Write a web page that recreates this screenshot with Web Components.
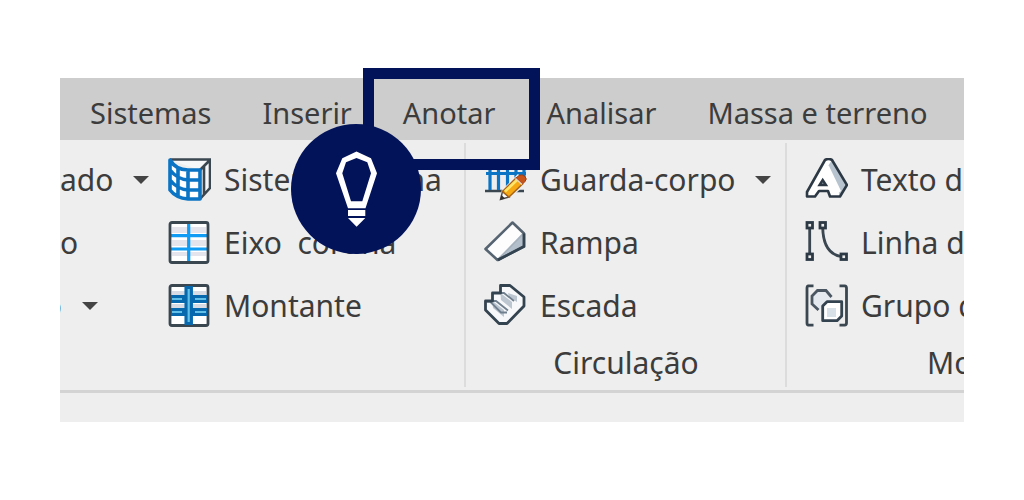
<!DOCTYPE html>
<html lang="pt-BR">
<head>
<meta charset="utf-8">
<title>Faixa de opções – Anotar</title>
<style>
  body { margin: 0; background: #fff; font-family: "Noto Sans", "Open Sans", sans-serif; color: #3c3c3c; }
</style>
</head>
<body>
<ribbon-view>
  <ribbon-tab slot="tabs">Sistemas</ribbon-tab>
  <ribbon-tab slot="tabs">Inserir</ribbon-tab>
  <ribbon-tab slot="tabs">Anotar</ribbon-tab>
  <ribbon-tab slot="tabs">Analisar</ribbon-tab>
  <ribbon-tab slot="tabs">Massa e terreno</ribbon-tab>

  <ribbon-panel>
    <ribbon-column class="cut">
      <ribbon-item menu>ado</ribbon-item>
      <ribbon-item>o</ribbon-item>
      <ribbon-item menu class="sliver">o</ribbon-item>
    </ribbon-column>
    <ribbon-column>
      <ribbon-item icon="curtain">Sistema cortina</ribbon-item>
      <ribbon-item icon="grid">Eixo  cortina</ribbon-item>
      <ribbon-item icon="mullion">Montante</ribbon-item>
    </ribbon-column>
  </ribbon-panel>
  <ribbon-panel class="ruled">
    <ribbon-column>
      <ribbon-item icon="railing" menu>Guarda-corpo</ribbon-item>
      <ribbon-item icon="ramp">Rampa</ribbon-item>
      <ribbon-item icon="stair">Escada</ribbon-item>
    </ribbon-column>
    <span slot="title">Circulação</span>
  </ribbon-panel>
  <ribbon-panel class="ruled last">
    <ribbon-column>
      <ribbon-item icon="text">Texto do</ribbon-item>
      <ribbon-item icon="line">Linha d</ribbon-item>
      <ribbon-item icon="group">Grupo d</ribbon-item>
    </ribbon-column>
    <span slot="title">Mo</span>
  </ribbon-panel>

  <tip-callout slot="callout"></tip-callout>
</ribbon-view>

<script>
const ICONS = {
  curtain: `<path d="M2 2H42V30L32 41V12Z" fill="#f6f7f8"/><path d="M2 1.500H42V30L32 41M32 12L42 2M36 8V36" fill="none" stroke="#3a4650" stroke-width="2.600"/>
    <path d="M2 2Q8 12 20 12H32V41H20Q8 40 2 32Z" fill="#fff"/>
    <path d="M2 2Q8 12 20 12H32V41H20Q8 40 2 32ZM10 9V38M20 12V41M2 12Q9 21 20 22H32M2 22Q9 31 20 32H32" fill="none" stroke="#0b74c4" stroke-width="3.600" stroke-linejoin="round"/>`,
  grid: `<rect x="2" y="1.500" width="38" height="40" rx="2" fill="#fff"/><path d="M4 6H38V12H4ZM4 19H38V25H4ZM4 31H38V35H4Z" fill="#e4e5ec"/><path d="M20.700 3V40M3 14.700H39M3 28H39" stroke="#109cf5" stroke-width="3.200"/><rect x="2" y="1.500" width="38" height="40" rx="2" fill="none" stroke="#3a4650" stroke-width="2.800"/>`,
  mullion: `<rect x="2" y="1.500" width="38" height="40" rx="2" fill="#fff"/><path d="M4 7H38V11H4ZM4 20H38V24H4Z" fill="#d8dbe3"/><rect x="2" y="1.500" width="38" height="40" rx="2" fill="none" stroke="#3a4650" stroke-width="2.800"/>
    <path d="M3 15H39M3 28H39" stroke="#0868ae" stroke-width="8"/><path d="M20.700 2V41" stroke="#0868ae" stroke-width="8.500"/><path d="M4 15H14M27 15H38M4 28H14M27 28H38M20.700 5V38" stroke="#62bfe8" stroke-width="2.200"/>`,
  railing: `<path d="M1 33H40" stroke="#3a4650" stroke-width="2.600"/><path d="M6 2V32M14.500 2V32M23.500 2V32M32 2V32M40 2V20M2 5H40M2 15.500H42" stroke="#0b74c4" stroke-width="3.200"/>
    <path d="M16.500 41.500L19 33L34 18L42 24L26 38.500Z" fill="#eee" stroke="#eee" stroke-width="3"/><path d="M16.500 41.500L18.500 33.500L25 39Z" fill="#fff" stroke="#55504c" stroke-width="1.500"/><path d="M16 42L17.500 37L21 40.500Z" fill="#333"/>
    <path d="M18.500 33.500L32 20L38.500 26L25 39Z" fill="#f6a912" stroke="#a96318" stroke-width="1.500"/><path d="M21 33.500L33 22" stroke="#ffe66a" stroke-width="2.600"/><path d="M32 20L35 17.500Q38 15.500 41 18.500Q43.500 21 41 23.500L38.500 26Z" fill="#c9541a" stroke="#9c3f13"/><path d="M31.500 20.500L38 26.500" stroke="#e8d6c4" stroke-width="1.500"/>`,
  ramp: `<path d="M28.500 1.500L40 12.500V25.500L13.500 39L1.500 28Z" fill="#fdfdfe"/><path d="M40 12.500V25.500L13.500 39Z" fill="#b3bfca"/><path d="M13.500 39L39 13" stroke="#a5b1bd" stroke-width="1.800"/><path d="M28.500 1.500L40 12.500V25.500L13.500 39L1.500 28Z" fill="none" stroke="#566472" stroke-width="2.600" stroke-linejoin="round"/><path d="M40 12.500V25.500L14 39" fill="none" stroke="#344350" stroke-width="2.600"/>`,
  stair: `<path d="M16.500 1.500H26L40 13V22L23 39.500H15L1.500 26V17H8.500V9H16.500Z" fill="#f6f8fa"/><path d="M8.500 17L20 26V33L9 24ZM16.500 9L28 18V25L17 16ZM24 9L33 12V18L25 13Z" fill="#bcc6d0"/>
    <path d="M16.500 9H20L30 17M8.500 17H12L24 26.500M3 17.500H6L17 28.500H23" fill="none" stroke="#71808e" stroke-width="1.800"/><path d="M16.500 1.500H26L40 13V22L23 39.500H15L1.500 26V17H8.500V9H16.500Z" fill="none" stroke="#344350" stroke-width="2.800" stroke-linejoin="round"/>`,
  text: `<path d="M20 2H27L42 27L35 38.500H25L23 33H14L10 38.500H2V34Z" fill="#fff"/><path d="M23 8L27 2L42 27L35 38Z" fill="#b7c4cf"/><path d="M20 5L24 8L36 33L31 37L20 15Z" fill="#fff"/><path d="M20 2Q23.500 0 27 2L42 27L35 38.500H25L23 33H14L10 38.500H2V34Z" fill="none" stroke="#2c3945" stroke-width="2.600" stroke-linejoin="round"/><path d="M17.700 22L21 27H14.500Z" fill="#8b98a4" stroke="#2c3945" stroke-width="2.400"/>`,
  line: `<path d="M4.700 6V34M17.700 6Q18 33 37 35.700" fill="none" stroke="#3a4650" stroke-width="2.800"/><g fill="#eee" stroke="#2c3945" stroke-width="2.800"><rect x="2" y="1.500" width="5.500" height="5.500"/><rect x="2" y="33" width="5.500" height="5.500"/><rect x="15" y="1.500" width="5.500" height="5.500"/><rect x="36" y="33" width="5.500" height="5.500"/></g>`,
  group: `<path d="M8.500 1.800H3.500Q2 2 2 4V39Q2 41 3.500 41.200H8.500M34.500 1.800H39.500Q41.500 2 41.500 4V39Q41.500 41 39.500 41.200H34.500" fill="none" stroke="#3a4650" stroke-width="2.800"/><path d="M13.500 26L7 20V12L12.500 6.500H21L26.500 12V18Z" fill="#e3e9ee"/><path d="M13.500 26L7 20V12L12.500 6.500H21L26.500 13" fill="none" stroke="#4a5763" stroke-width="2.800"/>
    <path d="M17.700 22L22 17.700H36.700V32L32 36.700H17.700Z" fill="#fff" stroke="#344350" stroke-width="2.800" stroke-linejoin="round"/><path d="M22 24H31V33H22Z" fill="#d9e1e8"/>`
};

const define = (name, html, setup) => {
  const template = document.createElement('template');
  template.innerHTML = html;
  customElements.define(name, class extends HTMLElement {
    constructor() {
      super();
      this.attachShadow({ mode: 'open' }).append(template.content.cloneNode(true));
    }
    connectedCallback() { if (setup) setup(this, this.shadowRoot); }
  });
};

define('ribbon-view', `
  <style>
    :host { display: block; position: relative; margin: 78px 60px; }
    .frame { overflow: hidden; background: #eee; }
    nav { display: flex; gap: 51px; padding: 8px 0 0 30px; background: #cdcdcd; }
    .panels { display: grid; grid-template-columns: minmax(0, 405fr) minmax(0, 321fr) minmax(0, 178fr); padding-top: 8px; border-bottom: 3px solid #d3d3d3; }
    footer { height: 29px; }
  </style>
  <div class="frame">
    <nav><slot name="tabs"></slot></nav>
    <div class="panels"><slot></slot></div>
    <footer></footer>
  </div>
  <slot name="callout"></slot>`);

define('ribbon-tab', `
  <style>
    :host { display: block; flex: none; }
    button { display: block; border: 0; padding: 0; background: none; font: inherit; font-size: 29px; line-height: 54px; color: inherit; white-space: nowrap; }
  </style>
  <button type="button"><slot></slot></button>`);

define('ribbon-panel', `
  <style>
    :host { display: block; position: relative; overflow: hidden; }
    .columns { display: flex; }
    .title { height: 53px; font-size: 30px; line-height: 52px; text-align: center; white-space: nowrap; }
    :host(.ruled) { margin: -5px 0 3px -1px; padding-top: 5px; border-left: 2px solid #dcdcdc; }
    :host(.ruled) .columns { padding-left: 18px; }
    :host(.ruled) .title { height: 50px; }
    :host(.last) .title { text-align: left; padding-left: 140px; }
  </style>
  <div class="columns"><slot></slot></div>
  <div class="title"><slot name="title"></slot></div>`);

define('ribbon-column', `
  <style>
    :host { display: block; flex: none; }
    :host(.cut) { width: 108px; }
  </style>
  <slot></slot>`);

define('ribbon-item', `
  <style>
    :host { display: block; }
    button { display: flex; align-items: center; gap: 13px; height: 63px; border: 0; padding: 0; background: none; font: inherit; font-size: 30px; line-height: 63px; color: inherit; white-space: pre; }
    svg { display: block; flex: none; }
    .arrow { width: 0; margin-left: 7px; border: 8px solid transparent; border-top-color: #444; border-bottom: 0; }
    .arrow[hidden] { display: none; }
    :host(.sliver) .label { display: flex; justify-content: flex-end; width: 2px; overflow: hidden; }
  </style>
  <button type="button"><span class="label"><slot></slot></span><span class="arrow" hidden></span></button>`,
  (host, root) => {
    const icon = ICONS[host.getAttribute('icon')];
    if (icon) root.querySelector('button').insertAdjacentHTML('afterbegin',
      `<svg width="43" height="43" viewBox="0 0 43 43" aria-hidden="true">${icon}</svg>`);
    root.querySelector('.arrow').hidden = !host.hasAttribute('menu');
  });

define('tip-callout', `
  <style>
    :host { display: block; position: absolute; left: 303px; top: -10px; width: 177px; height: 102px; box-sizing: border-box; border: 11px solid #031359; }
    svg { position: absolute; left: -83px; top: 45px; }
  </style>
  <svg width="130" height="130" viewBox="0 0 130 130" role="img" aria-label="Dica">
    <circle cx="65" cy="65" r="65" fill="#031359"/>
    <path fill="#fff" fill-rule="evenodd" d="M65.500 27.500L80 34.300L86 49.300L74.500 84.300H57L45 49.300L51.300 34.300ZM65.500 34L55 38.300L51.300 49.300L60 77.300H71.300L80 49.300L76.300 38.300Z"/>
    <path fill="#fff" d="M57 86H74.300V92H57ZM57 94H74.300L65.600 102.700Z"/>
  </svg>`);
</script>
</body>
</html>
